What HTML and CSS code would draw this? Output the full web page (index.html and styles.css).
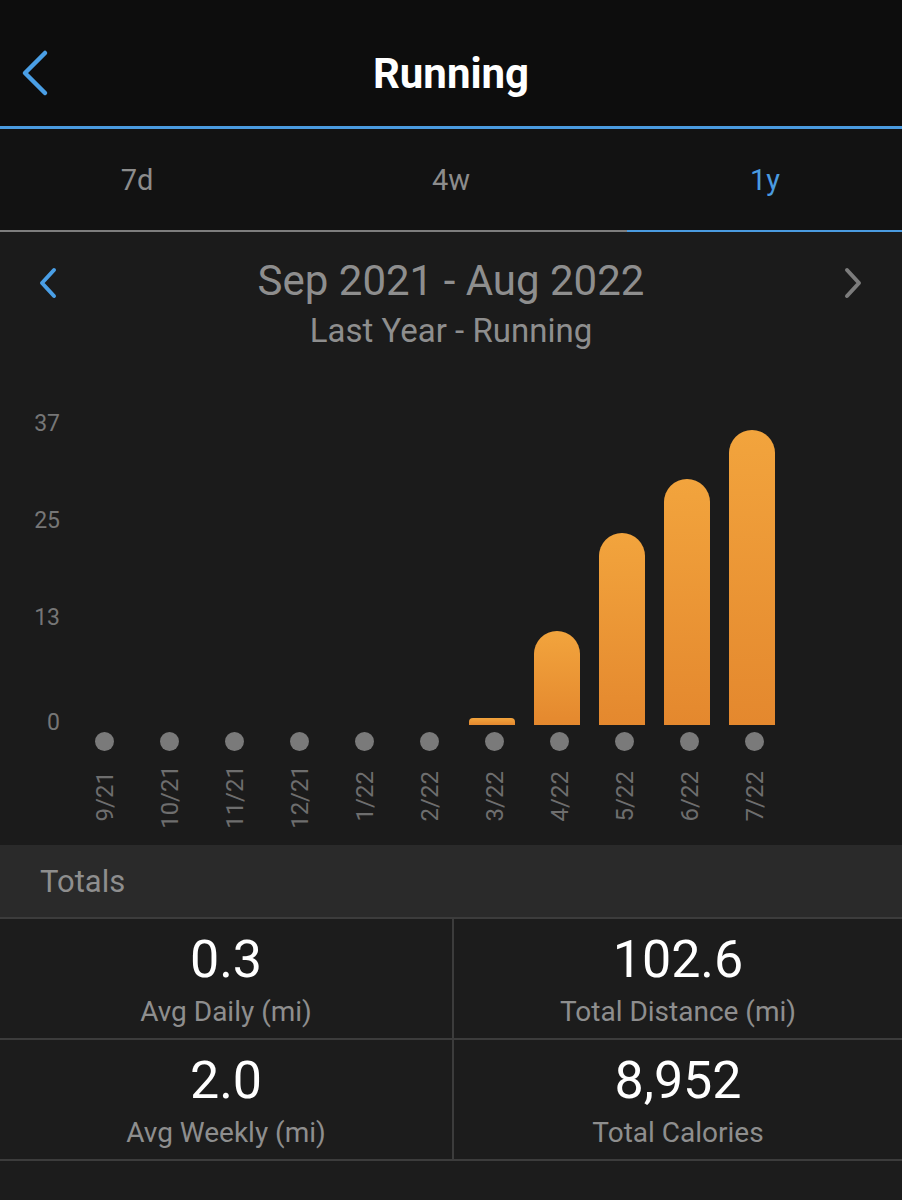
FILE: index.html
```html
<!DOCTYPE html>
<html lang="en">

<head>
    <meta charset="UTF-8">
    <meta name="viewport" content="width=device-width, initial-scale=1.0">
    <title>Running</title>
    <link rel="stylesheet" href="styles.css">
</head>

<body>
    <header class="topbar">
        <div class="back">
            <svg width="32" height="48" viewBox="0 0 32 48">
                <path d="M26 4 L6 24 L26 44" fill="none" stroke="#4a9fe6" stroke-width="4.5" stroke-linecap="round" stroke-linejoin="round" />
            </svg>
        </div>
        <h1 class="title">Running</h1>
        <div></div>
    </header>

    <nav class="tabs">
        <div class="tab-row">
            <div class="tab">7d</div>
            <div class="tab">4w</div>
            <div class="tab active">1y</div>
        </div>
        <div class="tab-line">
            <div class="line-gray"></div>
            <div class="line-blue"></div>
        </div>
    </nav>

    <section class="chart-panel">
        <div class="range">
            <div class="arrow">
                <svg width="22" height="32" viewBox="0 0 22 32">
                    <path d="M17 3 L5 16 L17 29" fill="none" stroke="#4a9fe6" stroke-width="4" stroke-linecap="round" stroke-linejoin="round" />
                </svg>
            </div>
            <div class="range-text">
                <div class="range-title">Sep 2021 - Aug 2022</div>
                <div class="range-sub">Last Year - Running</div>
            </div>
            <div class="arrow">
                <svg width="22" height="32" viewBox="0 0 22 32">
                    <path d="M5 3 L17 16 L5 29" fill="none" stroke="#7c7c7c" stroke-width="4" stroke-linecap="round" stroke-linejoin="round" />
                </svg>
            </div>
        </div>

        <div class="chart">
            <div class="axis">
                <div class="tick">37</div>
                <div class="tick">25</div>
                <div class="tick">13</div>
                <div class="tick zero">0</div>
            </div>
            <div class="plot">
                <div class="month"><div class="slot"></div><div class="dot"></div><div class="label"><span>9/21</span></div></div>
                <div class="month"><div class="slot"></div><div class="dot"></div><div class="label"><span>10/21</span></div></div>
                <div class="month"><div class="slot"></div><div class="dot"></div><div class="label"><span>11/21</span></div></div>
                <div class="month"><div class="slot"></div><div class="dot"></div><div class="label"><span>12/21</span></div></div>
                <div class="month"><div class="slot"></div><div class="dot"></div><div class="label"><span>1/22</span></div></div>
                <div class="month"><div class="slot"></div><div class="dot"></div><div class="label"><span>2/22</span></div></div>
                <div class="month"><div class="slot"><div class="bar small" style="height: 7px"></div></div><div class="dot"></div><div class="label"><span>3/22</span></div></div>
                <div class="month"><div class="slot"><div class="bar" style="height: 94px"></div></div><div class="dot"></div><div class="label"><span>4/22</span></div></div>
                <div class="month"><div class="slot"><div class="bar" style="height: 192px"></div></div><div class="dot"></div><div class="label"><span>5/22</span></div></div>
                <div class="month"><div class="slot"><div class="bar" style="height: 246px"></div></div><div class="dot"></div><div class="label"><span>6/22</span></div></div>
                <div class="month"><div class="slot"><div class="bar" style="height: 295px"></div></div><div class="dot"></div><div class="label"><span>7/22</span></div></div>
            </div>
        </div>
    </section>

    <section class="totals">
        <div class="totals-head">Totals</div>
        <div class="stats">
            <div class="stat">
                <div class="value">0.3</div>
                <div class="caption">Avg Daily (mi)</div>
            </div>
            <div class="stat">
                <div class="value">102.6</div>
                <div class="caption">Total Distance (mi)</div>
            </div>
            <div class="stat">
                <div class="value">2.0</div>
                <div class="caption">Avg Weekly (mi)</div>
            </div>
            <div class="stat">
                <div class="value">8,952</div>
                <div class="caption">Total Calories</div>
            </div>
        </div>
    </section>
</body>

</html>
```

FILE: styles.css
```css
* {
    margin: 0;
    padding: 0;
    box-sizing: border-box;
}

body {
    width: 902px;
    height: 1200px;
    overflow: hidden;
    background-color: #1c1c1c;
    font-family: Roboto, "Liberation Sans", sans-serif;
}

/* header */
.topbar {
    display: grid;
    grid-template-columns: 90px 1fr 90px;
    align-items: center;
    height: 129px;
    padding-top: 20px;
    background-color: #0d0d0d;
    border-bottom: 3px solid #4a9be0;
}

.back {
    display: flex;
    padding-left: 19px;
}

.title {
    text-align: center;
    color: #ffffff;
    font-size: 42px;
    font-weight: 700;
}

/* tabs */
.tabs {
    background-color: #121212;
}

.tab-row {
    display: grid;
    grid-template-columns: repeat(3, 314px);
    justify-content: center;
    height: 101px;
    align-items: center;
}

.tab {
    text-align: center;
    font-size: 29px;
    color: #8c8c8c;
}

.tab.active {
    color: #4a9be0;
}

.tab-line {
    display: flex;
    height: 2px;
}

.line-gray {
    width: 627px;
    background-color: #7e7e7e;
}

.line-blue {
    flex: 1;
    background-color: #4a9be0;
}

/* chart */
.chart-panel {
    background-color: #1b1b1b;
    height: 613px;
}

.range {
    display: grid;
    grid-template-columns: 90px 1fr 90px;
    padding-top: 26px;
}

.arrow {
    display: flex;
    justify-content: center;
    padding-top: 9px;
}

.arrow:first-child {
    justify-content: flex-start;
    padding-left: 37px;
}

.arrow:last-child {
    justify-content: flex-end;
    padding-right: 38px;
}

.range-text {
    text-align: center;
}

.range-title {
    font-size: 42px;
    line-height: 46px;
    color: #8e8e8e;
}

.range-sub {
    font-size: 33px;
    line-height: 38px;
    color: #8e8e8e;
    margin-top: 8px;
}

.chart {
    display: flex;
    margin-top: 62px;
}

.axis {
    display: flex;
    flex-direction: column;
    gap: 73px;
    width: 60px;
    text-align: right;
}

.tick {
    font-size: 23px;
    line-height: 24px;
    color: #767676;
}

.tick.zero {
    margin-top: 8px;
}

.plot {
    display: flex;
    margin-left: 12px;
}

.month {
    display: flex;
    flex-direction: column;
    align-items: center;
    width: 65px;
}

.slot {
    display: flex;
    align-items: flex-end;
    justify-content: center;
    height: 313px;
}

.bar {
    width: 46px;
    margin-right: 5px;
    border-radius: 23px 23px 0 0;
    background: linear-gradient(180deg, #f2a43d 0%, #e4882e 100%);
}

.bar.small {
    border-radius: 4px 4px 0 0;
}

.dot {
    width: 19px;
    height: 19px;
    margin-top: 7px;
    border-radius: 50%;
    background-color: #7a7a7a;
}

.label {
    display: flex;
    align-items: center;
    justify-content: center;
    height: 77px;
    margin-top: 7px;
}

.label span {
    writing-mode: vertical-rl;
    transform: rotate(180deg);
    font-size: 24px;
    line-height: 26px;
    color: #6e6e6e;
}

/* totals */
.totals-head {
    display: flex;
    align-items: center;
    height: 74px;
    padding-left: 40px;
    background-color: #2a2a2a;
    border-bottom: 2px solid #3c3c3c;
    font-size: 31px;
    color: #8e8e8e;
}

.stats {
    display: grid;
    grid-template-columns: 452px 1fr;
    gap: 2px;
    background-color: #3c3c3c;
    border-bottom: 2px solid #3c3c3c;
}

.stat {
    height: 119px;
    padding-top: 12px;
    text-align: center;
    background-color: #1c1c1c;
}

.value {
    font-size: 52px;
    line-height: 58px;
    color: #ffffff;
}

.caption {
    font-size: 28px;
    line-height: 32px;
    margin-top: 7px;
    color: #8e8e8e;
}
```
